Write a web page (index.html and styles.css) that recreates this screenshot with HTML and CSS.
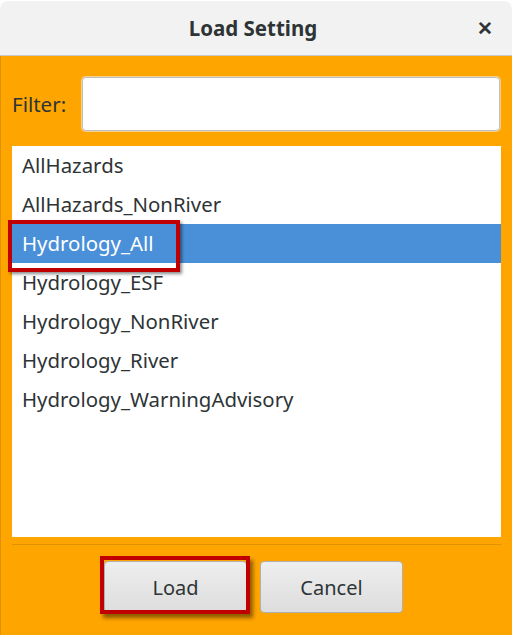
FILE: index.html
```html
<!DOCTYPE html>
<html lang="en">
<head>
    <meta charset="UTF-8">
    <title>Load Setting</title>
    <link rel="stylesheet" href="styles.css">
</head>
<body>
    <div class="dialog">
        <div class="titlebar">
            <span class="title">Load Setting</span>
            <span class="close">&#x2715;</span>
        </div>
        <div class="content">
            <div class="filter-row">
                <label for="filter">Filter:</label>
                <input type="text" id="filter">
            </div>
            <ul class="settings-list">
                <li>AllHazards</li>
                <li>AllHazards_NonRiver</li>
                <li class="selected"><span class="mark">Hydrology_All</span></li>
                <li>Hydrology_ESF</li>
                <li>Hydrology_NonRiver</li>
                <li>Hydrology_River</li>
                <li>Hydrology_WarningAdvisory</li>
            </ul>
            <div class="buttons">
                <span class="marked"><button>Load</button></span>
                <button>Cancel</button>
            </div>
        </div>
    </div>
</body>
</html>
```

FILE: styles.css
```css
body {
    margin: 0;
    background: #ffffff;
    font-family: "Noto Sans", sans-serif;
    color: #2e3436;
}
.dialog {
    width: 512px;
    height: 635px;
    display: flex;
    flex-direction: column;
}
.titlebar {
    height: 54px;
    margin-top: 1px;
    background: #f2f2f2;
    border-radius: 8px 8px 0 0;
    border-bottom: 1px solid #c8c8c8;
    display: flex;
    align-items: center;
    justify-content: center;
    position: relative;
}
.title {
    font-size: 20.5px;
    font-weight: bold;
    margin-right: 6px;
}
.close {
    position: absolute;
    right: 19px;
    top: 14px;
    font-size: 19px;
    font-weight: bold;
}
.content {
    flex: 1;
    background: #ffa500;
    border-left: 1px solid #e09300;
    padding: 21px 11px 0 11px;
}
.filter-row {
    display: flex;
    align-items: center;
    height: 54px;
}
.filter-row label {
    font-size: 20.5px;
    width: 70px;
}
.filter-row input {
    flex: 1;
    height: 54px;
    margin-right: 1px;
    box-sizing: border-box;
    border: 1px solid #bfbfbf;
    border-radius: 4px;
    box-shadow: 0 0 0 1px #f5d08a;
    background: #fff;
}
.settings-list {
    list-style: none;
    margin: 15px 0 0 0;
    padding: 0;
    height: 391px;
    background: #fff;
}
.settings-list li {
    height: 39px;
    line-height: 39px;
    padding-left: 10px;
    font-size: 20.4px;
}
.settings-list li.selected {
    background: #4a90d9;
    color: #fff;
}
.mark {
    position: relative;
}
.mark::before {
    content: "";
    position: absolute;
    left: -14px;
    top: -9px;
    width: 164px;
    height: 44px;
    border: 4px solid #c00000;
    box-shadow: 2px 2px 3px rgba(0, 0, 0, 0.45);
}
.buttons {
    border-top: 1px solid #e09300;
    margin-top: 7px;
    display: flex;
    align-items: flex-start;
    gap: 13px;
    padding: 16px 0 0 92px;
}
.buttons button {
    width: 143px;
    height: 52px;
    font-family: inherit;
    font-size: 20px;
    color: #2e3436;
    border: 1px solid #b0b0b0;
    border-radius: 4px;
    background: linear-gradient(#eeeeee, #dddddd);
}
.marked {
    position: relative;
    display: flex;
}
.marked::after {
    content: "";
    position: absolute;
    left: -4px;
    top: -5px;
    width: 142px;
    height: 50px;
    border: 4px solid #c00000;
    box-shadow: 3px 4px 4px rgba(0, 0, 0, 0.45);
}
```
